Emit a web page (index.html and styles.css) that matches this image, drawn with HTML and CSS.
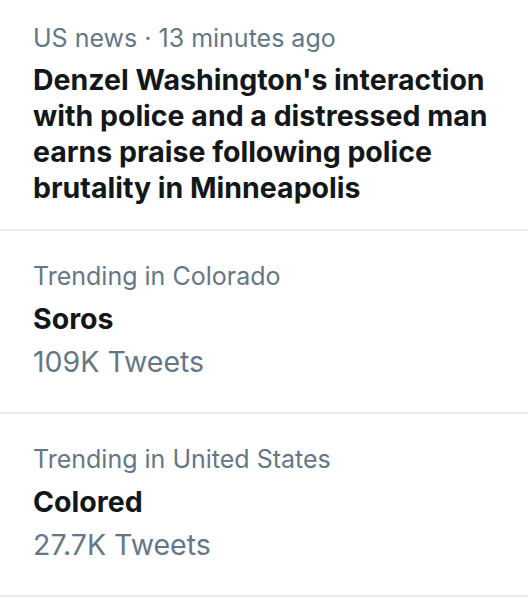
FILE: index.html
```html
<!DOCTYPE html>
<html lang="en">
<head>
<meta charset="utf-8">
<link rel="stylesheet" href="styles.css">
</head>
<body>
<div class="list">
  <div class="item news">
    <div class="meta">US news · 13 minutes ago</div>
    <div class="headline">Denzel Washington's interaction with police and a distressed man earns praise following police brutality in Minneapolis</div>
  </div>
  <div class="item trend">
    <div class="meta">Trending in Colorado</div>
    <div class="name">Soros</div>
    <div class="count">109K Tweets</div>
  </div>
  <div class="item trend">
    <div class="meta">Trending in United States</div>
    <div class="name">Colored</div>
    <div class="count">27.7K Tweets</div>
  </div>
</div>
</body>
</html>
```
FILE: styles.css
```css
html, body {
  margin: 0;
  padding: 0;
  background: #ffffff;
}
body {
  font-family: Inter, "Noto Sans", sans-serif;
  color: #14171a;
}
.list {
  display: flex;
  flex-direction: column;
}
.item {
  border-bottom: 2px solid #e6ecf0;
  padding: 0 10px 0 33px;
}
.news {
  padding-top: 20px;
  padding-bottom: 23px;
}
.news .meta {
  font-size: 25px;
  line-height: 36px;
  color: #657786;
}
.headline {
  font-size: 28.5px;
  font-weight: 700;
  line-height: 36px;
  margin-top: 6px;
}
.trend {
  padding-top: 24px;
  padding-bottom: 28px;
}
.trend .meta {
  font-size: 25px;
  line-height: 42px;
  color: #657786;
}
.name {
  font-size: 28.5px;
  font-weight: 700;
  line-height: 43px;
}
.count {
  font-size: 28.5px;
  line-height: 44px;
  color: #657786;
}
```
